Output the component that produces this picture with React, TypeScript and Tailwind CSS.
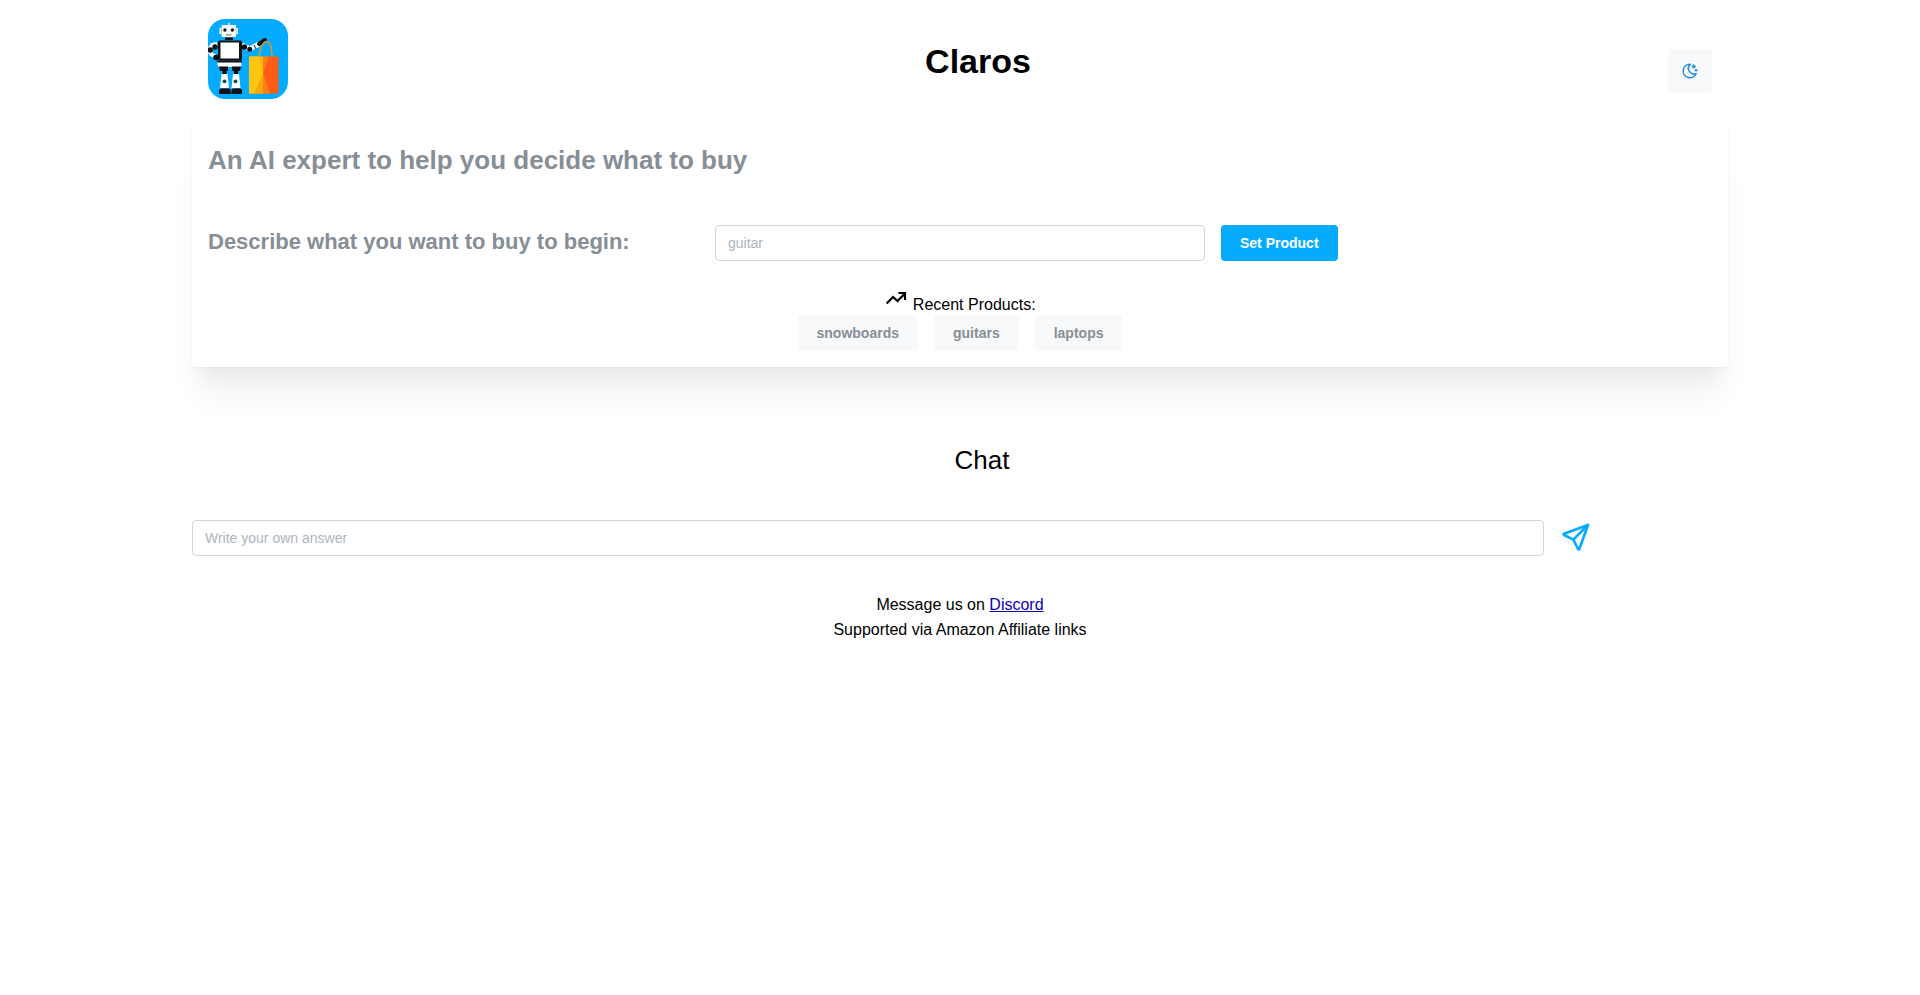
import { TbMoonStars, TbSend } from "react-icons/tb";

const recentProducts = ["snowboards", "guitars", "laptops"];

function Logo() {
  return (
    <svg viewBox="0 0 80 80" className="h-20 w-20" role="img" aria-label="Claros logo">
      <defs>
        <clipPath id="logo-clip">
          <rect width="80" height="80" rx="17" />
        </clipPath>
      </defs>
      <g clipPath="url(#logo-clip)">
        <rect width="80" height="80" fill="#04abff" />
        {/* arms */}
        <path d="M9 25L4 26L1 31L3 35L8 38" stroke="#fff" strokeWidth="4" fill="none" />
        <path d="M34 26L42 30L51 25" stroke="#fff" strokeWidth="5" fill="none" />
        <path d="M46 26l2 4" stroke="#111" strokeWidth="1" />
        <path d="M51 25L57 21" stroke="#111" strokeWidth="4" strokeLinecap="round" />
        <circle cx="2.3" cy="31" r="2.7" fill="#111" />
        <circle cx="7" cy="28" r="2.7" fill="#111" />
        <circle cx="8" cy="38.5" r="2.8" fill="#111" />
        <circle cx="36.5" cy="28" r="2.7" fill="#111" />
        <circle cx="41.7" cy="30.3" r="2.5" fill="#111" />
        {/* head */}
        <path d="M21 4v3" stroke="#fff" strokeWidth="1.5" />
        <rect x="11.5" y="9" width="3" height="6" fill="#fff" />
        <rect x="27" y="9" width="3" height="6" fill="#fff" />
        <rect x="13.5" y="6" width="14.5" height="12" rx="1" fill="#fff" />
        <path d="M13.5 9v6M28 9v6" stroke="#8b9aa3" strokeWidth=".6" />
        <circle cx="16.9" cy="11" r="1.7" fill="#111" />
        <circle cx="24.4" cy="11" r="1.7" fill="#111" />
        <path d="M18 15.5q2.7 1.5 5.4 0" stroke="#333" strokeWidth=".8" fill="none" />
        <rect x="17" y="18.5" width="8" height="2.5" fill="#111" />
        {/* body */}
        <rect x="10" y="21.5" width="24" height="20" rx="2" fill="#111" />
        <rect x="12.5" y="23.5" width="18.5" height="16" fill="#fff" />
        <rect x="9.5" y="42" width="24" height="6" rx="2" fill="#fff" />
        <path d="M8 41.5h26v2H10z" fill="#111" />
        {/* legs */}
        <path d="M11 47.5h9v4.500h-8zM24 47.5h9l-1 4.500h-8z" fill="#111" />
        <path d="M14.5 52h4v3.500h-4zM26 52h4v3.500h-4z" fill="#111" />
        <path d="M13.5 55h6l1.500 14h-9zM25 55h6l1.500 14h-9z" fill="#fff" />
        <circle cx="16.5" cy="62.3" r="1.9" fill="#174b39" />
        <circle cx="27.5" cy="62.3" r="1.9" fill="#174b39" />
        <path d="M11 75v-3q0-2.5 2-2.5h8q1.700 0 1.700 2.500v3zM23.3 75v-3q0-2.5 2-2.5h7q1.700 0 1.700 2.500v3z" fill="#111" />
        {/* bag */}
        <path d="M51 39C52 27 56 22 59 22.5C62 23 64 28 64 39" stroke="#d99a26" strokeWidth="1.5" fill="none" />
        <path d="M41 37.5h15v37H41z" fill="#ffb90d" />
        <path d="M41 37.5h9l5.500 17l-8 20H41z" fill="#ffc611" />
        <path d="M55 37.5h15.500v37H55z" fill="#ff5c14" />
        <path d="M55 37.5h6l-6 17zM55 54l7 20.500h-7z" fill="#ff8019" />
        <path d="M46 74.5l9-20v20z" fill="#f8a80b" />
      </g>
    </svg>
  );
}

function TrendIcon() {
  return (
    <svg
      viewBox="0 0 24 24"
      className="inline h-6 w-6 align-baseline"
      fill="none"
      stroke="currentColor"
      strokeWidth="2.2"
      aria-hidden="true"
    >
      <path d="M2.700 17.500L9 11L13.5 15L21 7.500M14.500 7H21V14" />
    </svg>
  );
}

function Header() {
  return (
    <header className="flex h-31 items-center justify-between px-4">
      <div className="flex h-full items-start pt-[19px]">
        <Logo />
      </div>
      <h1 className="mb-0.5 text-[34px] leading-[44px] font-bold">Claros</h1>
      <button
        type="button"
        aria-label="Toggle color scheme"
        className="mt-[18px] flex h-11 w-11 items-center justify-center rounded bg-[#f8f9fa] text-[#228be6]"
      >
        <TbMoonStars size={18} />
      </button>
    </header>
  );
}

function ProductPanel() {
  return (
    <section className="rounded bg-white p-4 shadow-[0_1px_3px_rgba(0,0,0,0.05),0_36px_28px_-7px_rgba(0,0,0,0.05),0_17px_17px_-7px_rgba(0,0,0,0.04)]">
      <h2 className="mt-1 text-[26px] leading-[33px] font-bold text-[#868e96]">
        An AI expert to help you decide what to buy
      </h2>
      <form className="mt-12 flex items-start gap-4">
        <label htmlFor="product" className="w-[491px] text-[22px] leading-[34px] font-bold text-[#868e96]">
          Describe what you want to buy to begin:
        </label>
        <input
          id="product"
          type="text"
          placeholder="guitar"
          className="h-9 w-[490px] rounded border border-[#ced4da] bg-white px-3 text-sm placeholder:text-[#adb5bd]"
        />
        <button type="button" className="h-9 rounded bg-[#04abff] px-[19px] text-sm font-bold text-white">
          Set Product
        </button>
      </form>
      <div className="mt-[25px] text-center leading-5">
        <TrendIcon /> Recent Products:
      </div>
      <div className="flex justify-center gap-4">
        {recentProducts.map((product) => (
          <button
            key={product}
            type="button"
            className="h-9 rounded bg-[#f8f9fa] px-[19px] text-sm font-bold text-[#868e96]"
          >
            {product}
          </button>
        ))}
      </div>
    </section>
  );
}

function Chat() {
  return (
    <section className="mt-[76px]">
      <h2 className="ml-11 text-center text-[26px] leading-[35px]">Chat</h2>
      <form className="mt-[42px] flex items-center gap-4">
        <input
          type="text"
          aria-label="Your answer"
          placeholder="Write your own answer"
          className="h-9 w-[88%] rounded border border-[#ced4da] bg-white px-3 text-sm placeholder:text-[#adb5bd]"
        />
        <button type="button" aria-label="Send" className="mb-0.5 text-[#04abff]">
          <TbSend size={32} />
        </button>
      </form>
    </section>
  );
}

export default function App() {
  return (
    <div className="min-h-screen bg-white px-[10%] font-['Liberation_Sans',Arial,sans-serif] text-base text-black">
      <Header />
      <ProductPanel />
      <Chat />
      <footer className="mt-9 text-center leading-[25px]">
        <p>
          Message us on{" "}
          <a href="#discord" className="text-[#0b00bd] underline">
            Discord
          </a>
        </p>
        <p>Supported via Amazon Affiliate links</p>
      </footer>
    </div>
  );
}
